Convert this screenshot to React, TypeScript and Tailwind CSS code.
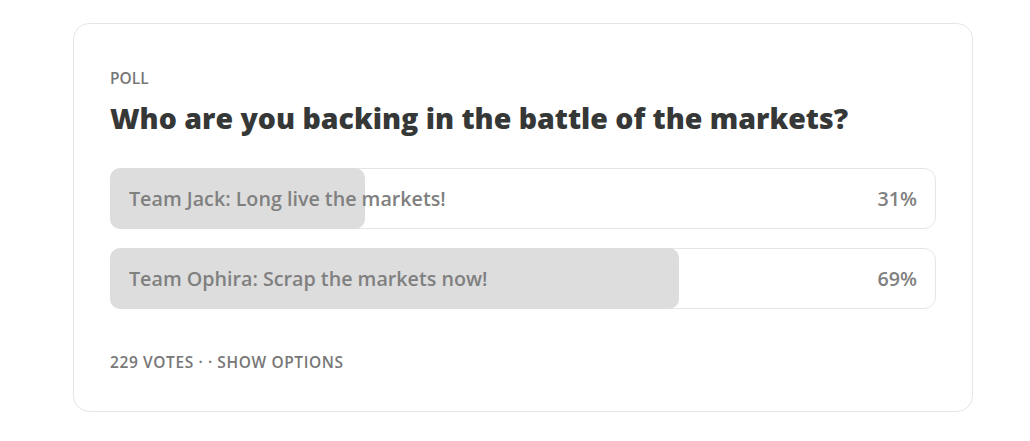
import React from "react";

// PollCard: tarjeta de encuesta con resultados.
interface PollOption {
  label: string;
  percent: number;
}

const options: PollOption[] = [
  { label: "Team Jack: Long live the markets!", percent: 31 },
  { label: "Team Ophira: Scrap the markets now!", percent: 69 },
];

export default function App() {
  return (
    <div className="min-h-[441px] bg-white pt-[23px] pl-[73px]" style={{ fontFamily: '"Open Sans", "Noto Sans", sans-serif' }}>
      <section className="w-[900px] rounded-2xl border border-[#e6e6e6] bg-white px-[36px] pt-[42px] pb-[37px]">
        <p className="text-[15.5px] font-semibold uppercase leading-[24px] text-[#777777]">Poll</p>
        <h2 className="mt-[8px] text-[28.5px] font-extrabold leading-[40px] text-[#363737]">
          Who are you backing in the battle of the markets?
        </h2>
        <div className="mt-[30px] flex flex-col gap-[19px]">
          {options.map((o) => (
            <div key={o.label} className="relative h-[61px] rounded-xl border border-[#e6e6e6]">
              <div
                className="absolute -top-px -bottom-px -left-px rounded-[10px] bg-[#dddddd]"
                style={{ width: `${o.percent}%` }}
              />
              <div className="relative flex h-full items-center justify-between px-[18px] text-[19.7px] font-semibold text-[#808080]">
                <span>{o.label}</span>
                <span>{o.percent}%</span>
              </div>
            </div>
          ))}
        </div>
        <p className="mt-[41px] text-[15.5px] font-semibold uppercase leading-[24px] tracking-[0.6px] text-[#777777]">
          229 votes · · Show options
        </p>
      </section>
    </div>
  );
}
